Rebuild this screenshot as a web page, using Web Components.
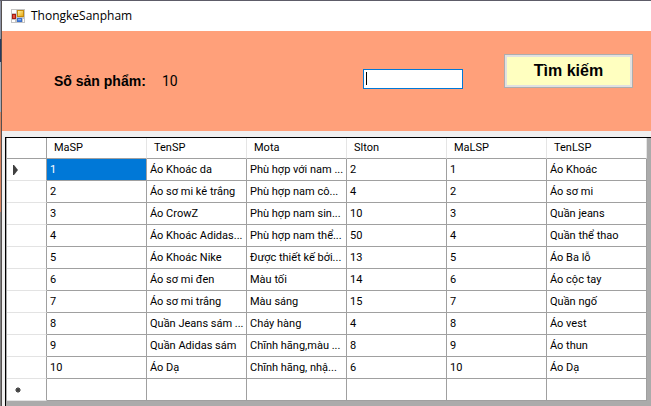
<!DOCTYPE html>
<html lang="vi">
<head>
<meta charset="utf-8">
<title>ThongkeSanpham</title>
<style>
html, body { height: 100%; }
body { margin: 0; overflow: hidden; font: 11px/16px Roboto, "Liberation Sans", sans-serif; color: #000; }
</style>
</head>
<body>
<stats-window>
  <window-title slot="title">ThongkeSanpham</window-title>
  <search-panel slot="panel" count="10"></search-panel>
  <data-grid slot="grid"></data-grid>
</stats-window>
<script>
const define = (name, html, setup) => customElements.define(name, class extends HTMLElement {
  constructor() {
    super();
    this.attachShadow({ mode: "open" });
  }
  connectedCallback() {
    this.shadowRoot.innerHTML = html;
    if (setup) setup(this, this.shadowRoot);
  }
});

define("stats-window", `
<style>
:host { display: block; box-sizing: border-box; height: 100%; padding: 1px 0 0 2px;
  background: linear-gradient(#5d5c68, #5d5c68) 0 0 / 100% 1px no-repeat,
    linear-gradient(90deg, transparent 1px, #55504f 1px) 0 0 / 2px 100% no-repeat,
    linear-gradient(#8d93a5 0 39px, #27395e 39px 62px, #a5acbb 62px 112px, #d8835f 112px 212px, #808080 212px); }
main { display: flex; flex-direction: column; height: 100%; background: #f0f0f0; }
.grid { display: flex; flex: 1; min-height: 0; padding: 6px 0 0 3px; }
</style>
<main><slot name="title"></slot><slot name="panel"></slot><div class="grid"><slot name="grid"></slot></div></main>`);

define("window-title", `
<style>
:host { display: block; background: #fff; }
header { display: flex; align-items: center; gap: 6px; height: 30px; padding-left: 9px; }
h1 { margin: 0; font: 12px/16px "Open Sans", "Noto Sans", sans-serif; }
svg { display: block; }
</style>
<header>
<svg width="14" height="14" viewBox="0 0 14 14" aria-hidden="true">
<defs>
<linearGradient id="y" x2="1" y2="1"><stop stop-color="#fff3a0"/><stop offset="1" stop-color="#e9a913"/></linearGradient>
<linearGradient id="b" x2="0" y2="1"><stop stop-color="#9cc5ff"/><stop offset="1" stop-color="#3572dc"/></linearGradient>
</defs>
<path fill="#c4c4c4" d="M0 0h14v14H0z"/>
<path fill="#fff" d="M1 1h4v3H1zM1 11h3v2H1zM12 10h1v3h-1z"/>
<path fill="#a51b14" d="M1 5h4v5H1z"/><path fill="#e5533c" d="M2 6h2v3H2z"/>
<path fill="#c58a0a" d="M6 1h7v7H6z"/><path fill="url(#y)" d="M7 2h5v5H7z"/>
<path fill="#3b6fc9" d="M6 9h5v4H6z"/><path fill="url(#b)" d="M7 10h3v2H7z"/>
</svg>
<h1><slot></slot></h1>
</header>`);

define("search-panel", `
<style>
:host { display: block; background: #ffa07a; }
form { display: grid; grid-template-columns: 108px 1fr 100px 170px; height: 100px; padding: 0 18px 0 52px; }
label, output { font-size: 14px; line-height: 20px; margin-top: 40px; }
label { font-family: "Liberation Sans", sans-serif; font-weight: 700; white-space: nowrap; }
input { box-sizing: border-box; width: 100%; height: 20px; margin: 38px 0 0; padding: 0 2px; border: 1px solid #0078d7; border-radius: 0; background: #fff; font: inherit; outline: 0; }
button { box-sizing: border-box; justify-self: end; width: 129px; height: 34px; margin: 23px 0 0; padding: 0; border: 1px solid #adadad; border-radius: 0; background: #ffffc0; box-shadow: inset 0 0 0 2px #e1e1e1; color: #000; font: 700 16px/20px "Liberation Sans", sans-serif; }
.field { position: relative; }
.caret { position: absolute; left: 3px; top: 41px; width: 1px; height: 13px; background: #000; }
</style>
<form onsubmit="return false">
<label for="count">Số sản phẩm:</label><output id="count"></output>
<div class="field"><input type="text" aria-label="Từ khóa"><span class="caret"></span></div>
<button type="submit">Tìm kiếm</button>
</form>`, (host, root) => { root.querySelector("output").textContent = host.getAttribute("count"); });

define("data-grid", `
<style>
:host { display: block; flex: 1; min-width: 0; overflow: hidden; box-sizing: border-box; padding: 0 4px 0 1px; border: solid #000; border-width: 1px 0 0 1px; background: #ababab; }
table { width: 100%; table-layout: fixed; border-collapse: separate; border-spacing: 0; background: #fff; }
th, td { box-sizing: border-box; height: 22px; padding: 2px 0 1px 3px; border: solid #a0a0a0; border-width: 0 1px 1px 0; text-align: left; font-weight: 400; white-space: nowrap; overflow: hidden; line-height: 18px; }
thead th { height: 21px; padding: 1px 0 1px 7px; border-right-color: #e5e5e5; }
thead th.lead, .lead { width: 40px; padding: 0 0 0 6px; border-right-color: #a0a0a0; }
tbody .lead { border-bottom-color: #e3e3e3; }
.on { background: #0078d7; color: #fff; }
svg { display: block; }
</style>
<table><thead></thead><tbody></tbody></table>`, (host, root) => {
  const heads = ["MaSP", "TenSP", "Mota", "Slton", "MaLSP", "TenLSP"];
  const rows = [
    ["1", "Áo Khoác da", "Phù hợp với nam ...", "2", "1", "Áo Khoác"],
    ["2", "Áo sơ mi kẻ trắng", "Phù hợp nam cô...", "4", "2", "Áo sơ mi"],
    ["3", "Áo CrowZ", "Phù hợp nam sin...", "10", "3", "Quần jeans"],
    ["4", "Áo Khoác Adidas...", "Phù hợp nam thể...", "50", "4", "Quần thể thao"],
    ["5", "Áo Khoác Nike", "Được thiết kế bởi...", "13", "5", "Áo Ba lỗ"],
    ["6", "Áo sơ mi đen", "Màu tối", "14", "6", "Áo cộc tay"],
    ["7", "Áo sơ mi trắng", "Màu sáng", "15", "7", "Quần ngố"],
    ["8", "Quần Jeans sám ...", "Cháy hàng", "4", "8", "Áo vest"],
    ["9", "Quần Adidas sám", "Chĩnh hãng,màu ...", "8", "9", "Áo thun"],
    ["10", "Áo Dạ", "Chĩnh hãng, nhậ...", "6", "10", "Áo Dạ"],
    ["", "", "", "", "", ""]
  ];
  const arrow = '<svg width="8" height="10" viewBox="0 0 8 10"><path d="M0 0h1l4 5-4 5H0z" fill="#404040"/></svg>';
  const star = '<svg width="10" height="8" viewBox="0 0 10 8"><path d="M5 1v6M2 4h6M3 2l4 4M7 2L3 6" stroke="#505050" stroke-width="1"/><circle cx="5" cy="4" r="2" fill="#404040"/></svg>';
  root.querySelector("thead").innerHTML = '<tr><th class="lead"></th>' + heads.map(h => `<th scope="col">${h}</th>`).join("") + "</tr>";
  root.querySelector("tbody").innerHTML = rows.map((r, i) =>
    `<tr><th class="lead">${i === 0 ? arrow : i === rows.length - 1 ? star : ""}</th>` +
    r.map((c, j) => `<td${i + j === 0 ? ' class="on"' : ""}>${c}</td>`).join("") + "</tr>").join("");
});
</script>
</body>
</html>
